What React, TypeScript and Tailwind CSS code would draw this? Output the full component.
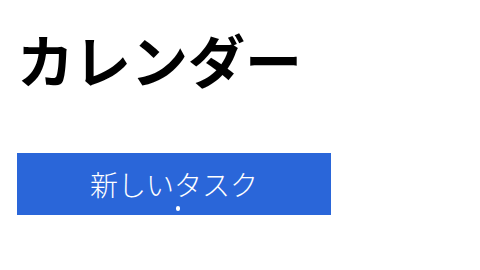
export default function App() {
  return (
    <div
      className="w-[480px] h-[270px] bg-white px-[17px] pt-[30px]"
      style={{ fontFamily: '"Noto Sans CJK JP", "Noto Sans", sans-serif' }}
    >
      <h1 className="text-[57px] font-bold leading-none text-black">カレンダー</h1>
      <button className="relative mt-[66px] flex h-[62px] w-[314px] items-center justify-center bg-[#2a66d9] text-[28px] font-light text-white">
        新しいタスク
        <span className="absolute left-[159px] top-[53px] h-[5px] w-[4px] rounded-sm bg-white" />
      </button>
    </div>
  );
}
